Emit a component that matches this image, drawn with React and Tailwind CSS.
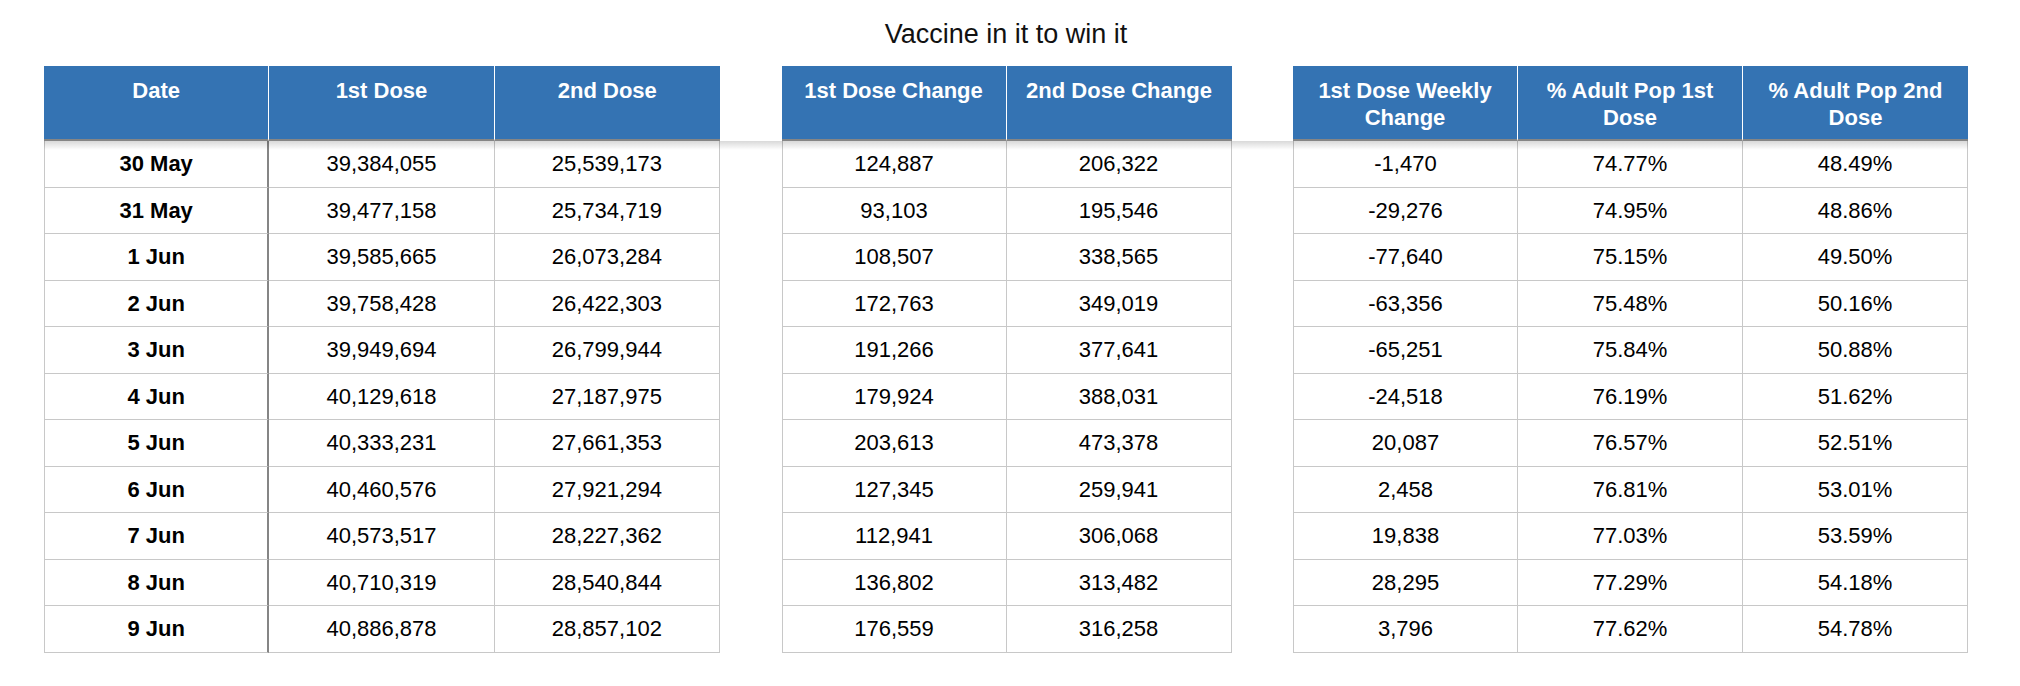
import React from "react";

const dates = ["30 May", "31 May", "1 Jun", "2 Jun", "3 Jun", "4 Jun", "5 Jun", "6 Jun", "7 Jun", "8 Jun", "9 Jun"];

const firstDose = ["39,384,055", "39,477,158", "39,585,665", "39,758,428", "39,949,694", "40,129,618", "40,333,231", "40,460,576", "40,573,517", "40,710,319", "40,886,878"];
const secondDose = ["25,539,173", "25,734,719", "26,073,284", "26,422,303", "26,799,944", "27,187,975", "27,661,353", "27,921,294", "28,227,362", "28,540,844", "28,857,102"];
const firstChange = ["124,887", "93,103", "108,507", "172,763", "191,266", "179,924", "203,613", "127,345", "112,941", "136,802", "176,559"];
const secondChange = ["206,322", "195,546", "338,565", "349,019", "377,641", "388,031", "473,378", "259,941", "306,068", "313,482", "316,258"];
const weekly = ["-1,470", "-29,276", "-77,640", "-63,356", "-65,251", "-24,518", "20,087", "2,458", "19,838", "28,295", "3,796"];
const pctFirst = ["74.77%", "74.95%", "75.15%", "75.48%", "75.84%", "76.19%", "76.57%", "76.81%", "77.03%", "77.29%", "77.62%"];
const pctSecond = ["48.49%", "48.86%", "49.50%", "50.16%", "50.88%", "51.62%", "52.51%", "53.01%", "53.59%", "54.18%", "54.78%"];

const tables = [
  {
    width: "w-[676px]",
    cols: [
      { title: "Date", values: dates, bold: true, darkRight: true },
      { title: "1st Dose", values: firstDose },
      { title: "2nd Dose", values: secondDose },
    ],
  },
  {
    width: "w-[450px]",
    cols: [
      { title: "1st Dose Change", values: firstChange },
      { title: "2nd Dose Change", values: secondChange },
    ],
  },
  {
    width: "w-[675px]",
    cols: [
      { title: "1st Dose Weekly Change", values: weekly },
      { title: "% Adult Pop 1st Dose", values: pctFirst },
      { title: "% Adult Pop 2nd Dose", values: pctSecond },
    ],
  },
];

const Column = ({ col, first, last }) => (
  <div className="flex-1 flex flex-col min-w-0">
    <div
      className={`h-[75px] bg-[#3473b3] border-b-2 border-[#858585] px-3 pt-[11px] text-center text-white font-bold text-[22px] leading-[27px] ${
        last ? "" : "border-r border-r-white"
      }`}
    >
      {col.title}
    </div>
    {col.values.map((v, i) => (
      <div
        key={i}
        className={`h-[46.5px] flex items-center justify-center border-b border-[#c8c8c8] text-[22px] text-black ${
          col.bold ? "font-bold" : ""
        } ${first ? "border-l border-l-[#c8c8c8]" : ""} ${
          col.darkRight
            ? "border-r-2 border-r-[#858585]"
            : "border-r border-r-[#c8c8c8]"
        }`}
      >
        {v}
      </div>
    ))}
  </div>
);

const Table = ({ table }) => (
  <div className={`${table.width} flex`}>
    {table.cols.map((col, i) => (
      <Column
        key={col.title}
        col={col}
        first={i === 0}
        last={i === table.cols.length - 1}
      />
    ))}
  </div>
);

export default function App() {
  return (
    <div
      className="w-[2020px] h-[686px] bg-white pl-[44px]"
      style={{ fontFamily: '"Liberation Sans", Arial, sans-serif' }}
    >
      <div className="w-[1924px]">
        <div className="h-[66px] pt-[18px] text-center text-[27px] leading-[32px] text-[#111]">
          Vaccine in it to win it
        </div>
        <div className="relative flex justify-between">
          {tables.map((t, i) => (
            <Table key={i} table={t} />
          ))}
          <div className="absolute left-0 right-0 top-[75px] h-[9px] bg-gradient-to-b from-black/15 to-transparent pointer-events-none" />
        </div>
      </div>
    </div>
  );
}
